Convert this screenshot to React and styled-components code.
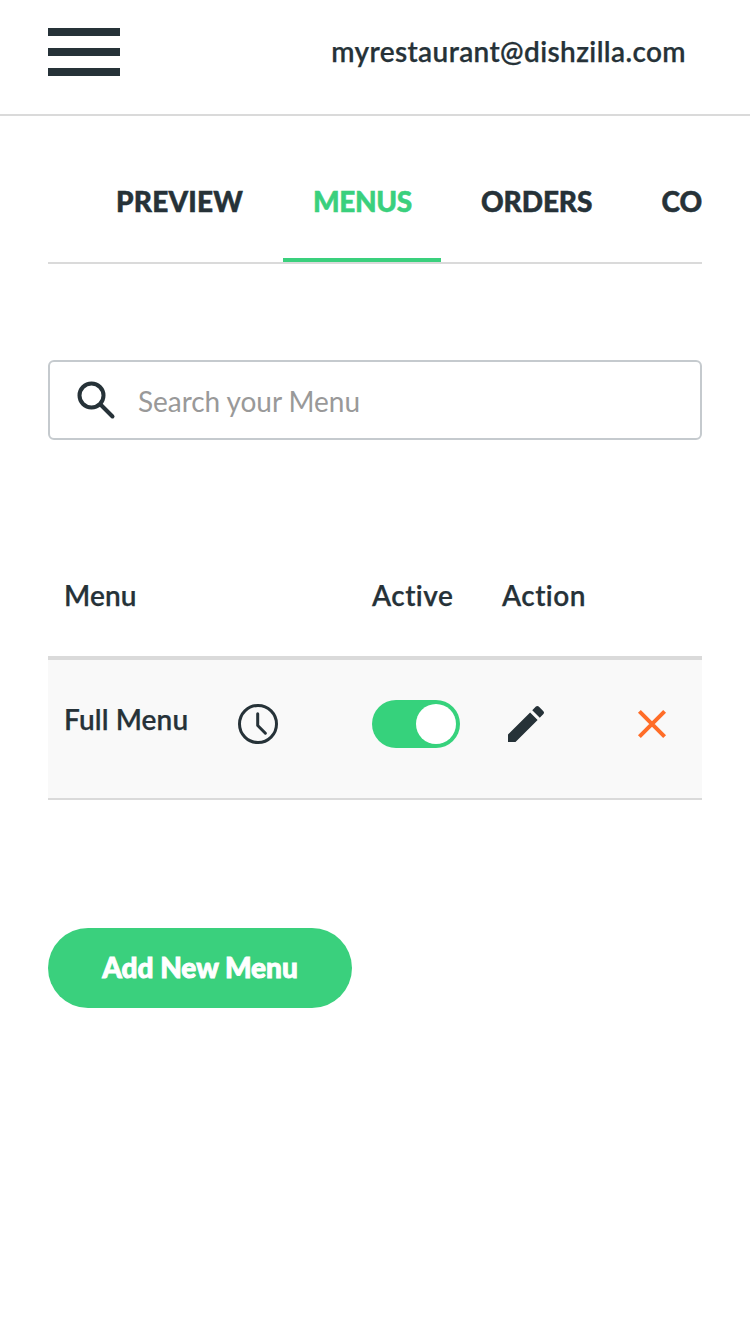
import React from 'react';
import styled, { createGlobalStyle } from 'styled-components';

const Global = createGlobalStyle`
  * { box-sizing: border-box; }
  body {
    margin: 0; background: #fff; color: #263238; font: 600 28px/38px Lato, sans-serif; overflow: hidden;
    font-variant-ligatures: none; -webkit-font-smoothing: antialiased;
  }
  svg { display: block; }
`;
const Header = styled.header`
  height: 116px; padding: 28px 64px 0 48px; border-bottom: 2px solid #dadada;
  display: flex; justify-content: space-between; align-items: flex-start;
`;
const MenuButton = styled.button`
  width: 72px; height: 48px; padding: 0; border: 0; background: none;
  display: flex; flex-direction: column; justify-content: space-between;
`;
const Bar = styled.span`height: 8px; width: 100%; background: #263238;`;
const Email = styled.span`margin-top: 4px; white-space: nowrap; letter-spacing: 0.38px; -webkit-text-stroke: 0.25px;`;
const Main = styled.main`padding: 24px 48px 0;`;
const Tabs = styled.nav`
  height: 124px; display: flex; padding-left: 38px; overflow: hidden; border-bottom: 2px solid #dadada;
`;
const Tab = styled.a`
  flex: 0 0 ${p => p.$width}px; padding: 42px 0 0 ${p => p.$inset ?? 30}px; white-space: nowrap; font-weight: 900;
  letter-spacing: ${p => p.$tracking ?? 0}px; -webkit-text-stroke: 0.5px;
  color: ${p => (p.$active ? '#3ad07d' : 'inherit')};
  border-bottom: 4px solid ${p => (p.$active ? '#3ad07d' : 'transparent')};
`;
const Search = styled.label`
  margin-top: 96px; height: 80px; display: flex; align-items: center; padding-left: 26px;
  border: 2px solid #c5cace; border-radius: 6px;
`;
const Input = styled.input`
  flex: 1; margin-left: 22px; padding: 2px 0 0; border: 0; outline: 0; background: none; font: 400 28px/40px Lato, sans-serif;
  &::placeholder { color: #999; opacity: 1; letter-spacing: -0.05px; }
`;
const Table = styled.section`margin-top: 96px;`;
const Row = styled.div`display: grid; grid-template-columns: 174px 134px 130px 130px 1fr; padding-left: 16px;`;
const HeadRow = styled(Row)`height: 124px; padding-top: 40px; border-bottom: 4px solid #dadada;`;
const BodyRow = styled(Row)`height: 140px; padding-top: 40px; background: #f9f9f9; border-bottom: 2px solid #dadada;`;
const Cell = styled.div`
  grid-column: ${p => p.$column}; white-space: nowrap; letter-spacing: ${p => p.$tracking ?? 0.12}px; -webkit-text-stroke: 0.25px;
`;
const Toggle = styled.button`
  width: 88px; height: 48px; padding: 4px; border: 0; border-radius: 24px; background: #36d27c;
  display: flex; justify-content: flex-end;
`;
const Knob = styled.span`width: 40px; height: 40px; border-radius: 50%; background: #fff;`;
const AddButton = styled.button`
  margin-top: 128px; width: 304px; height: 80px; border: 0; border-radius: 40px; padding: 0 0 2px;
  background: #3ad07d; color: #fff; font: 900 28px/38px Lato, sans-serif; -webkit-text-stroke: 0.9px;
`;

const SearchIcon = () => (
  <svg width="40" height="40" viewBox="0 0 40 40" fill="none" stroke="#263238" strokeWidth="4" strokeLinecap="round">
    <circle cx="15.5" cy="15.5" r="12" /><path d="m24.5 24.5 12 12" />
  </svg>
);
const ClockIcon = () => (
  <svg width="40" height="48" viewBox="0 0 40 48" fill="none" stroke="#263238" strokeWidth="3" strokeLinecap="round" strokeLinejoin="round">
    <circle cx="20" cy="24" r="18.5" /><path d="M19.7 13.8V25.5l7.7 7.7" />
  </svg>
);
const PencilIcon = () => (
  <svg width="48" height="48" viewBox="0 0 24 24" fill="#263238">
    <path d="M3 17.25V21h3.75L17.81 9.94l-3.75-3.75L3 17.25zM20.71 7.04a1 1 0 0 0 0-1.41l-2.34-2.34a1 1 0 0 0-1.41 0l-1.83 1.83 3.75 3.75 1.83-1.83z" />
  </svg>
);
const CloseIcon = () => (
  <svg width="40" height="48" viewBox="0 0 40 48" fill="none" stroke="#ff6d28" strokeWidth="4">
    <path d="m7.4 11.4 25.2 25.2M32.6 11.4 7.4 36.6" />
  </svg>
);

export default function App() {
  return (
    <>
      <Global />
      <Header>
        <MenuButton aria-label="Open navigation"><Bar /><Bar /><Bar /></MenuButton>
        <Email>myrestaurant@dishzilla.com</Email>
      </Header>
      <Main>
        <Tabs>
          <Tab $width={197} $tracking={0.2}>PREVIEW</Tab>
          <Tab $width={158} $tracking={-0.35} $active>MENUS</Tab>
          <Tab $width={190} $inset={40} $tracking={-0.1}>ORDERS</Tab>
          <Tab $width={72} $inset={30.5}>CO</Tab>
        </Tabs>
        <Search><SearchIcon /><Input placeholder="Search your Menu" /></Search>
        <Table>
          <HeadRow>
            <Cell $column={1}>Menu</Cell>
            <Cell $column={3} $tracking={0.45}>Active</Cell>
            <Cell $column={4} $tracking={0.45}>Action</Cell>
          </HeadRow>
          <BodyRow>
            <Cell $column={1}>Full Menu</Cell>
            <Cell $column={2}><ClockIcon /></Cell>
            <Cell $column={3}><Toggle role="switch" aria-checked="true" aria-label="Active"><Knob /></Toggle></Cell>
            <Cell $column={4}><PencilIcon /></Cell>
            <Cell $column={5}><CloseIcon /></Cell>
          </BodyRow>
        </Table>
        <AddButton>Add New Menu</AddButton>
      </Main>
    </>
  );
}
